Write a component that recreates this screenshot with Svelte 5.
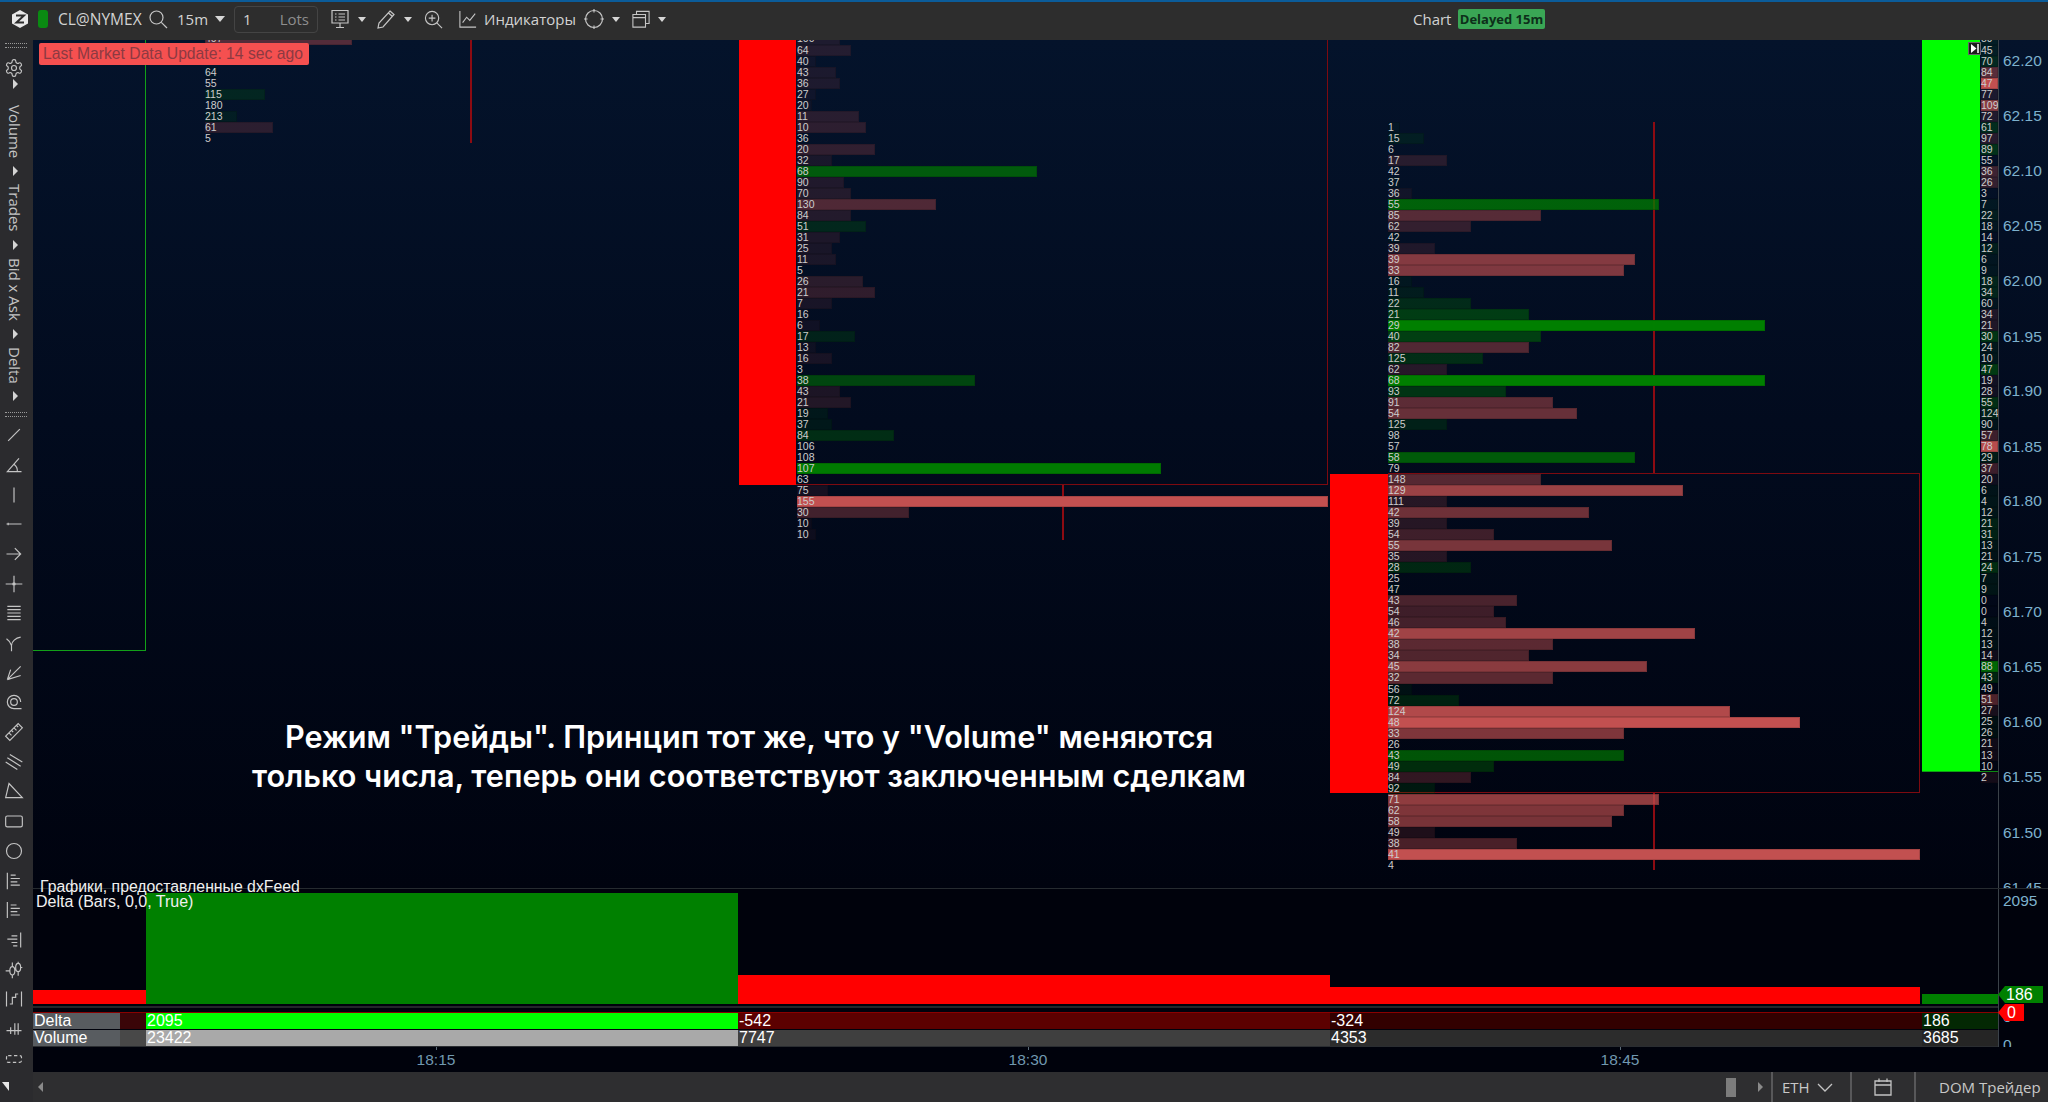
<script>
  const rowH = 11.03;

  // [label, kind, bar width in px]
  const profiles = [
    { x: 172, first: -1, rows: [
      ['407','r',147],['','',0],['','',0],['64','g',13],['55','r',6],['115','g',60],['180','',0],['213','g',32],['61','r',68],['5','r',5]
    ]},
    { x: 764, first: -1, rows: [
      ['100','r',43],['64','r',54],['40','r',19],['43','r',39],['36','r',43],['27','r',19],['20','r',15],['11','r',62],['10','r',69],['36','',0],
      ['20','r',78],['32','r',35],['68','g',240],['90','r',47],['70','r',54],['130','r',139],['84','r',54],['51','g',69],['31','r',43],['25','r',35],
      ['11','r',39],['5','',0],['26','r',66],['21','r',78],['7','r',35],['16','r',11],['6','r',23],['17','g',58],['13','r',19],['16','r',35],
      ['3','',0],['38','g',178],['43','r',43],['21','r',54],['19','g',31],['37','g',35],['84','g',97],['106','',0],['108','',0],['107','g',364],
      ['63','',0],['75','r',31],['155','r',531],['30','r',112],['10','r',15],['10','r',19]
    ]},
    { x: 1355, first: 7, rows: [
      ['1','g',12],['15','g',36],['6','',0],['17','r',59],['42','',0],['37','g',12],['36','r',24],['55','g',271],['85','r',153],['62','r',83],
      ['42','g',12],['39','r',47],['39','r',247],['33','r',236],['16','g',24],['11','g',36],['22','g',83],['21','g',141],['29','g',377],['40','g',153],
      ['82','r',141],['125','g',95],['62','r',59],['68','g',377],['93','g',118],['91','r',165],['54','r',189],['125','g',59],['98','g',12],['57','',0],
      ['58','g',247],['79','',0],['148','r',153],['129','r',295],['111','r',59],['42','r',201],['39','r',59],['54','r',106],['55','r',224],['35','r',59],
      ['28','g',83],['25','',0],['47','g',12],['43','r',129],['54','r',106],['46','r',118],['42','r',307],['38','r',165],['34','r',141],['45','r',259],
      ['32','r',165],['56','g',24],['72','g',71],['124','r',342],['48','r',412],['33','r',236],['26','',0],['43','g',236],['49','g',106],['84','r',83],
      ['92','g',47],['71','r',271],['62','r',236],['58','r',224],['49','r',47],['38','r',129],['41','r',532],['4','',0]
    ]}
  ];

  // last, unfinished bar: [label, kind, strength]
  const lastColumn = [
    ['59','g',.1],['45','g',.1],['70','g',.2],['84','r',.45],['47','r',1],['77','r',.12],['109','r',.7],['72','r',.15],['61','g',.25],['97','r',.18],
    ['89','g',.3],['55','',0],['36','r',.3],['26','r',.25],['3','',0],['7','g',.08],['22','g',.12],['18','g',.06],['14','',0],['12','g',.15],
    ['6','g',.06],['9','g',.08],['18','g',.2],['34','g',.2],['60','g',.06],['34','r',.15],['21','r',.15],['30','g',.35],['24','g',.1],['10','g',.1],
    ['47','g',.4],['19','r',.08],['28','r',.08],['55','g',.3],['124','g',.2],['90','g',.08],['57','r',.3],['78','r',.95],['29','g',.15],['37','r',.3],
    ['20','r',.08],['6','g',.08],['4','g',.1],['12','g',.1],['21','g',.2],['31','g',.2],['13','g',.1],['21','g',.08],['24','g',.3],['7','g',.1],
    ['9','g',.1],['0','',0],['0','',0],['4','g',.05],['12','g',.06],['13','g',.08],['14','r',.08],['88','g',.8],['43','g',.25],['49','',0],
    ['51','r',.4],['27','r',.12],['25','g',.08],['26','g',.08],['21','r',.08],['13','r',.08],['10','',0],['2','r',.1]
  ];

  const fill = (kind, a) => {
    if (!kind) return 'transparent';
    return kind === 'r' ? `rgba(194,80,80,${a})` : `rgba(0,128,0,${a})`;
  };
  const strength = (w) => Math.min(1, Math.pow(w / 380, 0.9)).toFixed(3);

  const prices = [
    ['62.20',61],['62.15',116],['62.10',171],['62.05',226],['62.00',281],['61.95',337],['61.90',391],['61.85',447],
    ['61.80',501],['61.75',557],['61.70',612],['61.65',667],['61.60',722],['61.55',777],['61.50',833],['61.45',888]
  ];

  const deltaBars = [
    { w: 113, h: 14, c: '#ff0000', m: 0 },
    { w: 592, h: 111, c: '#008000', m: 0 },
    { w: 592, h: 29, c: '#ff0000', m: 0 },
    { w: 590, h: 17, c: '#ff0000', m: 0 },
    { w: 76, h: 10, c: '#008000', m: 2 }
  ];

  const statRows = [
    { name: 'Delta', stub: '#3a0508', cells: [['2095','#00ff00'],['-542','#5c0000'],['-324','#320000'],['186','#032803']] },
    { name: 'Volume', stub: '#484848', cells: [['23422','#a9a9a9'],['7747','#3f3f3f'],['4353','#2c2c2c'],['3685','#252525']] }
  ];

  const times = ['18:15', '18:30', '18:45'];

  const gear = 'M12.22 2h-.44a2 2 0 0 0-2 2v.18a2 2 0 0 1-1 1.73l-.43.25a2 2 0 0 1-2 0l-.15-.08a2 2 0 0 0-2.73.73l-.22.38a2 2 0 0 0 .73 2.73l.15.1a2 2 0 0 1 1 1.72v.51a2 2 0 0 1-1 1.74l-.15.09a2 2 0 0 0-.73 2.73l.22.38a2 2 0 0 0 2.73.73l.15-.08a2 2 0 0 1 2 0l.43.25a2 2 0 0 1 1 1.73V20a2 2 0 0 0 2 2h.44a2 2 0 0 0 2-2v-.18a2 2 0 0 1 1-1.73l.43-.25a2 2 0 0 1 2 0l.15.08a2 2 0 0 0 2.73-.73l.22-.39a2 2 0 0 0-.73-2.73l-.15-.08a2 2 0 0 1-1-1.74v-.5a2 2 0 0 1 1-1.74l.15-.09a2 2 0 0 0 .73-2.73l-.22-.38a2 2 0 0 0-2.73-.73l-.15.08a2 2 0 0 1-2 0l-.43-.25a2 2 0 0 1-1-1.73V4a2 2 0 0 0-2-2zM15 12a3 3 0 1 1-6 0a3 3 0 1 1 6 0z';

  const tools = [
    'M5 19L19 5',
    'M18 4L4 20H21M12 11a10 10 0 0 1 4 9',
    'M12 3V21',
    'M3 12H21M5 10.5V13.5',
    'M3 12H20M13 5L20 12L13 19',
    'M12 2V22M2 12H22M10.5 12a1.5 1.5 0 1 0 3 0a1.5 1.5 0 1 0-3 0',
    'M4 4H20M4 8H20M4 12H20M4 16H20M4 20H20',
    'M9 21V15C9 10 14 6 20 5M9 15C8 12 6 9 3 7M9 20V22',
    'M20 4L4 20M4 20L8 8M4 20L20 15',
    'M20 12a8 8 0 1 0-8 8H21M16 12a4 4 0 1 0-8 0a4 4 0 1 0 8 0',
    'M2 17L17 2L22 7L7 22ZM6 13L9 16M9 10L11 12M12 7L15 10M15 4L17 6',
    'M7 3L22 12M4 7L20 17M2 12L16 21',
    'M6 3L22 20H2Z',
    'M4 6H20a2 2 0 0 1 2 2V17a2 2 0 0 1-2 2H4a2 2 0 0 1-2-2V8a2 2 0 0 1 2-2Z',
    'M21 12a9 9 0 1 1-18 0a9 9 0 1 1 18 0',
    'M4 2V22M8 5H14M8 9H19M8 13H16M8 17H19',
    'M4 3V21M8 6H15M8 10H19M8 14H16M8 18H19M4 2.5V3.5M4 20.5V21.5',
    'M20 3V21M9 7H16M4 11H16M9 15H16M11 19H16',
    'M2 13H7M7 13a3 5 0 1 0 6 0a3 5 0 1 0-6 0M10 3V8M10 18V22M14 9a3 5 0 1 0 6 0a3 5 0 1 0-6 0M17 2V4M17 14V19M20 9H22',
    'M3 3V21M21 3V21M7 18H10V10H14V6H17',
    'M3 14H21M8 10V18M13 5V19M17 5V19',
    'M5 8H19a2 2 0 0 1 2 2V14a2 2 0 0 1-2 2H5a2 2 0 0 1-2-2V10a2 2 0 0 1 2-2Z'
  ];
</script>

<div class="app">
  <header class="topbar">
    <div class="tb logo">
      <svg width="18" height="20" viewBox="0 0 18 20"><path d="M9 1L17 5.5V14.5L9 19L1 14.5V5.5Z" fill="#e8e8e8"/><path d="M5 6.5H13L5.5 13.5H13" fill="none" stroke="#2d2d2d" stroke-width="2"/></svg>
    </div>
    <span class="status-pill"></span>
    <span class="symbol">CL@NYMEX</span>
    <svg class="ic search" width="20" height="20" viewBox="0 0 20 20"><circle cx="8.5" cy="8.5" r="6.5"/><path d="M13.3 13.3L19 19"/></svg>
    <span class="interval">15m</span>
    <span class="caret c-interval"></span>
    <div class="lots"><span>1</span><span class="lots-unit">Lots</span></div>
    <svg class="ic monitor" width="20" height="20" viewBox="0 0 20 20"><path d="M2 1.500H18V14H2ZM10 14V18M6 18.500H14M5 5H6.500M8.500 5H15M5 8H6.500M8.500 8H15M5 11H6.500M8.500 11H15"/></svg>
    <span class="caret c-small"></span>
    <svg class="ic pencil" width="20" height="20" viewBox="0 0 20 20"><path d="M14 2L18 5.500L7 18L2 19L3 14ZM12.500 4L16.500 7.500"/></svg>
    <span class="caret c-small"></span>
    <svg class="ic zoom-ic" width="19" height="19" viewBox="0 0 20 20"><circle cx="8.500" cy="8.500" r="7"/><path d="M13.500 13.500L19 19M5 8.500H12M8.500 5V12"/></svg>
    <svg class="ic chart-ic" width="18" height="18" viewBox="0 0 20 20"><path d="M1 1V19H19M4 14L8.500 8L12 11.500L18 4"/></svg>
    <span class="indicators">Индикаторы</span>
    <svg class="ic cross" width="20" height="20" viewBox="0 0 20 20"><circle cx="10" cy="10" r="8.500"/><path d="M10 0V3.500M10 16.500V20M0 10H3.500M16.500 10H20"/></svg>
    <span class="caret c-small"></span>
    <svg class="ic windows" width="18" height="18" viewBox="0 0 20 20"><path d="M1 5H15V19H1ZM1 8.500H15M5 5V1.500H19V15H15M5 5H15"/></svg>
    <span class="caret c-small"></span>
    <div class="feed-state">
      <span class="feed-name">Chart</span>
      <span class="badge">Delayed 15m</span>
    </div>
  </header>

  <div class="body">
    <aside class="tools">
      <div class="dots"></div>
      <svg class="gear" width="20" height="20" viewBox="0 0 24 24"><path d={gear}/></svg>
      <span class="tri first"></span>
      <span class="rot">Volume</span>
      <span class="tri"></span>
      <span class="rot">Trades</span>
      <span class="tri"></span>
      <span class="rot">Bid x Ask</span>
      <span class="tri"></span>
      <span class="rot">Delta</span>
      <span class="tri"></span>
      <div class="dots"></div>
      {#each tools as d, i}
        <svg class="tool" class:dashed={i === tools.length - 1} width="20" height="20" viewBox="0 0 24 24"><path {d}/></svg>
      {/each}
      <span class="corner"></span>
    </aside>

    <main class="workspace">
      <section class="pane price-pane">
        <div class="plot">
          <div class="candle-line first-candle"></div>
          <div class="wick" style="left:437px;top:0;height:103px"></div>
          <div class="candle red" style="left:706px;top:0;width:57px;height:445px"></div>
          <div class="range" style="left:763px;top:-2px;width:532px;height:447px"></div>
          <div class="wick" style="left:1029px;top:445px;height:55px"></div>
          <div class="wick" style="left:1620px;top:82px;height:352px"></div>
          <div class="wick" style="left:1620px;top:753px;height:77px"></div>
          <div class="candle red" style="left:1297px;top:434px;width:58px;height:319px"></div>
          <div class="range" style="left:1355px;top:433px;width:532px;height:320px"></div>
          <div class="candle lime" style="left:1889px;top:0;width:58px;height:731px"></div>
          <div class="lime-edge"></div>

          {#each profiles as p}
            <div class="profile" style="left:{p.x}px;top:{4.5 + rowH * p.first}px">
              {#each p.rows as [label, kind, w]}
                <div class="row" style="width:{w}px;background:{fill(kind, strength(w))}">{label}</div>
              {/each}
            </div>
          {/each}

          <div class="profile last" style="top:{4.5 - rowH}px">
            {#each lastColumn as [label, kind, a]}
              <div class="row" style="width:17px;background:{fill(kind, a)}">{label}</div>
            {/each}
          </div>

          <button class="to-end" aria-label="Scroll to end">
            <svg width="9" height="9" viewBox="0 0 9 9"><path d="M1 0L6.500 4.500L1 9Z" fill="#fff"/><path d="M8 0V9" stroke="#fff" stroke-width="1.500"/></svg>
          </button>

          <div class="market-alert">Last Market Data Update: 14 sec ago</div>

          <p class="caption">Режим "Трейды". Принцип тот же, что у "Volume" меняются<br />только числа, теперь они соответствуют заключенным сделкам</p>
        </div>
        <div class="axis">
          {#each prices as [v, y]}
            <span class="tick" style="top:{y - 40}px">{v}</span>
          {/each}
        </div>
      </section>

      <section class="pane delta-pane">
        <div class="plot delta-plot">
          <span class="study">Delta (Bars, 0,0, True)</span>
          {#each deltaBars as b}
            <div style="width:{b.w}px;height:{b.h}px;background:{b.c};margin-left:{b.m}px"></div>
          {/each}
        </div>
        <div class="axis">
          <span class="tick" style="top:12px">2095</span>
        </div>
      </section>

      <section class="pane stats-pane">
        <div class="stats">
          {#each statRows as r}
            <div class="stat-name">{r.name}</div>
            <div style="background:{r.stub}"></div>
            {#each r.cells as [v, bg]}
              <div class="stat-cell" style="background:{bg}">{v}</div>
            {/each}
          {/each}
        </div>
        <div class="axis">
          <span class="tick" style="top:11px">0</span>
          <span class="tick" style="top:39px">0</span>
        </div>
      </section>

      <div class="timeline">
        {#each times as t}
          <span class="time">{t}</span>
        {/each}
      </div>

      <footer class="statusbar">
        <span class="arrow-left"></span>
        <span class="thumb"></span>
        <span class="arrow-right"></span>
        <span class="status-item eth">ETH
          <svg width="16" height="9" viewBox="0 0 16 9"><path d="M1 1L8 8L15 1" fill="none" stroke="#c4c4c4" stroke-width="1.300"/></svg>
        </span>
        <span class="status-item cal">
          <svg width="18" height="18" viewBox="0 0 18 18" fill="none" stroke="#c4c4c4" stroke-width="1.300"><path d="M1 3H17V17H1ZM1 7H17M5 0.500V4M13 0.500V4"/></svg>
        </span>
        <span class="status-item dom">DOM Трейдер</span>
      </footer>

      <span class="credit">Графики, предоставленные dxFeed</span>
      <span class="tag green-tag">186</span>
      <span class="tag red-tag">0</span>
    </main>
  </div>
</div>

<style>
  :global(body) {
    margin: 0;
    background: #000;
  }

  .app {
    width: 2048px;
    height: 1102px;
    display: flex;
    flex-direction: column;
    overflow: hidden;
    font-family: "Liberation Sans", Arial, sans-serif;
    color: #fff;
  }

  /* top toolbar */
  .topbar {
    height: 38px;
    box-sizing: content-box;
    border-top: 2px solid #0b5c9a;
    background: #2d2d2d;
    display: flex;
    font-family: "Open Sans", sans-serif;
    font-size: 15px;
    color: #d2d2d2;
    flex-shrink: 0;
  }
  .topbar > * {
    align-self: center;
    position: relative;
    top: -2px;
  }
  .logo {
    margin-left: 11px;
    display: flex;
  }
  .status-pill {
    width: 10px;
    height: 18px;
    margin-left: 9px;
    border-radius: 3px;
    background: #0a8a12;
  }
  .symbol {
    margin-left: 10px;
    width: 84px;
    font-size: 15.500px;
    white-space: nowrap;
  }
  .ic {
    fill: none;
    stroke: #c6c6c6;
    stroke-width: 1.200;
    flex-shrink: 0;
  }
  .search { margin-left: 6px; }
  .interval { margin-left: 9px; width: 28px; }
  .caret {
    width: 0;
    height: 0;
    border-left: 5px solid transparent;
    border-right: 5px solid transparent;
    border-top: 6px solid #d6d6d6;
  }
  .c-interval { margin-left: 10px; }
  .c-small {
    margin-left: 8px;
    border-left-width: 4.500px;
    border-right-width: 4.500px;
    border-top-width: 5px;
  }
  .lots {
    width: 84px;
    height: 27px;
    margin-left: 9px;
    padding: 0 8px;
    box-sizing: border-box;
    border: 1px solid #444;
    border-radius: 4px;
    display: flex;
    justify-content: space-between;
    align-items: center;
  }
  .lots-unit { color: #8e8e8e; }
  .monitor { margin-left: 12px; }
  .pencil { margin-left: 10px; }
  .zoom-ic { margin-left: 12px; }
  .chart-ic { margin-left: 16px; }
  .indicators { margin-left: 7px; width: 90px; white-space: nowrap; }
  .cross { margin-left: 10px; }
  .windows { margin-left: 12px; }
  .feed-state {
    margin-left: auto;
    margin-right: 503px;
    display: flex;
    align-items: center;
    gap: 8px;
  }
  .feed-name { width: 37px; }
  .badge {
    width: 87px;
    height: 20px;
    line-height: 20px;
    text-align: center;
    background: #3aa655;
    border-radius: 2px;
    color: #0d2f1a;
    font-size: 13px;
    font-weight: 700;
    white-space: nowrap;
  }

  .body {
    flex: 1;
    display: flex;
    min-height: 0;
  }

  /* left drawing tools */
  .tools {
    width: 33px;
    box-sizing: border-box;
    padding-right: 5px;
    flex-shrink: 0;
    background: #2b2b2e;
    display: flex;
    flex-direction: column;
    align-items: center;
    font-family: "Open Sans", sans-serif;
    color: #c4c4c4;
    font-size: 15px;
  }
  .dots {
    width: 22px;
    height: 3px;
    margin: 3px 0 3px 3px;
    border-top: 1px dotted #9a9a9a;
    border-bottom: 1px dotted #9a9a9a;
    flex-shrink: 0;
  }
  .gear, .tool {
    fill: none;
    stroke: #c4c4c4;
    stroke-width: 1.400;
    flex-shrink: 0;
  }
  .gear { margin-top: 7px; }
  .tool {
    margin: 4.850px 0;
  }
  .tool.dashed { stroke-dasharray: 4 3; }
  .tri {
    width: 0;
    height: 0;
    margin: 8px 0 8px 2px;
    border-top: 5px solid transparent;
    border-bottom: 5px solid transparent;
    border-left: 5px solid #d4d4d4;
    flex-shrink: 0;
  }
  .tri.first { margin: 1px 0 16px 2px; }
  .rot {
    writing-mode: vertical-rl;
    white-space: nowrap;
    line-height: 22px;
    margin-left: 2px;
  }
  .corner {
    margin: 9px auto 0 2px;
    width: 0;
    height: 0;
    border-top: 9px solid #e6e6e6;
    border-left: 7px solid transparent;
    flex-shrink: 0;
    align-self: flex-start;
  }

  .workspace {
    position: relative;
    flex: 1;
    display: flex;
    flex-direction: column;
    min-width: 0;
  }

  .pane {
    display: flex;
    flex-shrink: 0;
  }
  .plot {
    position: relative;
    width: 1965px;
    overflow: hidden;
  }
  .axis {
    position: relative;
    flex: 1;
    border-left: 1px solid #3b4249;
    color: #7db1cd;
    font-size: 15.500px;
    overflow: hidden;
  }
  .tick {
    position: absolute;
    left: 4px;
    transform: translateY(-50%);
  }

  /* price chart */
  .price-pane {
    height: 848px;
    background: linear-gradient(#04132b, #020b1e 45%, #00030f);
  }
  .plot > div { box-sizing: border-box; }
  .candle { position: absolute; }
  .candle.red { background: #ff0000; }
  .candle.lime { background: #00ff00; }
  .candle-line {
    position: absolute;
    left: 0;
    top: 0;
    width: 113px;
    height: 611px;
    border-right: 1px solid #12a018;
    border-bottom: 1px solid #12a018;
  }
  .lime-edge {
    position: absolute;
    left: 1889px;
    top: 731px;
    width: 76px;
    height: 1px;
    background: #0fa014;
  }
  .wick {
    position: absolute;
    width: 1.500px;
    background: #8d0b12;
  }
  .range {
    position: absolute;
    border: 1px solid #7d0a10;
    border-left: none;
  }
  .profile {
    position: absolute;
    font-size: 10.500px;
    color: #cdcdcd;
  }
  .profile.last { left: 1948px; }
  .row {
    height: 11.030px;
    line-height: 11px;
    white-space: nowrap;
    box-sizing: border-box;
    box-shadow: inset 0 0 0 1px rgba(0, 0, 0, .14);
  }
  .to-end {
    position: absolute;
    left: 1935px;
    top: 2px;
    width: 13px;
    height: 13px;
    padding: 0;
    border: 1px solid #666;
    background: #1c1c1c;
    display: flex;
    align-items: center;
    justify-content: center;
  }
  .market-alert {
    position: absolute;
    left: 6px;
    top: 3px;
    width: 270px;
    height: 22px;
    line-height: 22px;
    padding-left: 4px;
    box-sizing: border-box;
    background: #f55050;
    border-radius: 2px;
    color: #8c3a42;
    font-size: 15.700px;
    white-space: nowrap;
  }
  .caption {
    position: absolute;
    left: 216px;
    top: 677px;
    width: 1000px;
    margin: 0;
    text-align: center;
    font-family: Inter, sans-serif;
    font-weight: 600;
    font-size: 30.600px;
    line-height: 39px;
    color: #fff;
    white-space: nowrap;
  }
  .credit {
    position: absolute;
    left: 7px;
    top: 839px;
    font-size: 15.800px;
    line-height: 16px;
    white-space: nowrap;
    color: #f0f0f0;
  }

  /* delta study */
  .delta-pane {
    height: 118px;
    border-top: 1px solid #262b30;
    box-sizing: border-box;
    background: #00020c;
  }
  .delta-plot {
    display: flex;
    align-items: flex-end;
    padding-bottom: 2px;
    box-sizing: border-box;
  }
  .delta-plot > div { flex-shrink: 0; }
  .study {
    position: absolute;
    left: 3px;
    top: 5px;
    z-index: 1;
    font-size: 16px;
    line-height: 16px;
    color: #f0f0f0;
    white-space: nowrap;
  }

  /* data rows */
  .stats-pane {
    height: 41px;
    background: #00020c;
  }
  .stats {
    width: 1965px;
    height: 41px;
    box-sizing: border-box;
    padding-top: 5px;
    border-top: 2px solid #24272b;
    border-bottom: 2px solid #2a2d31;
    display: grid;
    grid-template-columns: 87px 26px 592px 592px 592px 76px;
    grid-template-rows: 16px 16px;
    row-gap: 1px;
    font-size: 16px;
    line-height: 15px;
    position: relative;
  }
  .stats::before {
    content: "";
    position: absolute;
    left: 0;
    right: 0;
    top: 4px;
    height: 1px;
    background: #8a0000;
  }
  .stat-name {
    background: #585c60;
    padding-left: 1px;
  }
  .stat-cell { padding-left: 1px; }

  /* time axis */
  .timeline {
    height: 25px;
    flex-shrink: 0;
    display: flex;
    padding-left: 107px;
    background: #00020c;
    color: #7098b0;
    font-size: 15.500px;
  }
  .time {
    position: relative;
    width: 592px;
    text-align: center;
    line-height: 26px;
  }
  .time::before {
    content: "";
    position: absolute;
    left: 50%;
    top: 0;
    width: 1px;
    height: 3px;
    background: #5a6a76;
  }

  /* bottom bar */
  .statusbar {
    flex: 1;
    display: flex;
    align-items: center;
    background: #2e2e30;
    font-family: "Open Sans", sans-serif;
    font-size: 15px;
    color: #c8c8c8;
  }
  .arrow-left {
    margin-left: 5px;
    width: 0;
    height: 0;
    border-top: 5px solid transparent;
    border-bottom: 5px solid transparent;
    border-right: 5px solid #8a8a8a;
  }
  .thumb {
    margin-left: auto;
    width: 10px;
    height: 19px;
    background: #7c7c7c;
  }
  .arrow-right {
    margin-left: 22px;
    margin-right: 8px;
    width: 0;
    height: 0;
    border-top: 5px solid transparent;
    border-bottom: 5px solid transparent;
    border-left: 5px solid #8a8a8a;
  }
  .status-item {
    height: 30px;
    display: flex;
    align-items: center;
    box-sizing: border-box;
    border-left: 2px solid #58585a;
    white-space: nowrap;
  }
  .eth { width: 79px; padding-left: 9px; gap: 7px; }
  .cal { width: 64px; padding-left: 22px; }
  .dom { width: 134px; padding-left: 23px; }

  /* last value tags on the axis */
  .tag {
    position: absolute;
    left: 1965px;
    height: 17px;
    line-height: 17px;
    font-size: 16px;
    color: #fff;
    box-sizing: border-box;
  }
  .green-tag {
    top: 946px;
    width: 45px;
    padding-left: 8px;
    background: #008000;
    clip-path: polygon(0 50%, 7px 0, 100% 0, 100% 100%, 7px 100%);
  }
  .red-tag {
    top: 964px;
    width: 26px;
    padding-left: 9px;
    background: #ff0000;
    clip-path: polygon(0 50%, 7px 0, 100% 0, 100% 100%, 7px 100%);
  }
</style>
